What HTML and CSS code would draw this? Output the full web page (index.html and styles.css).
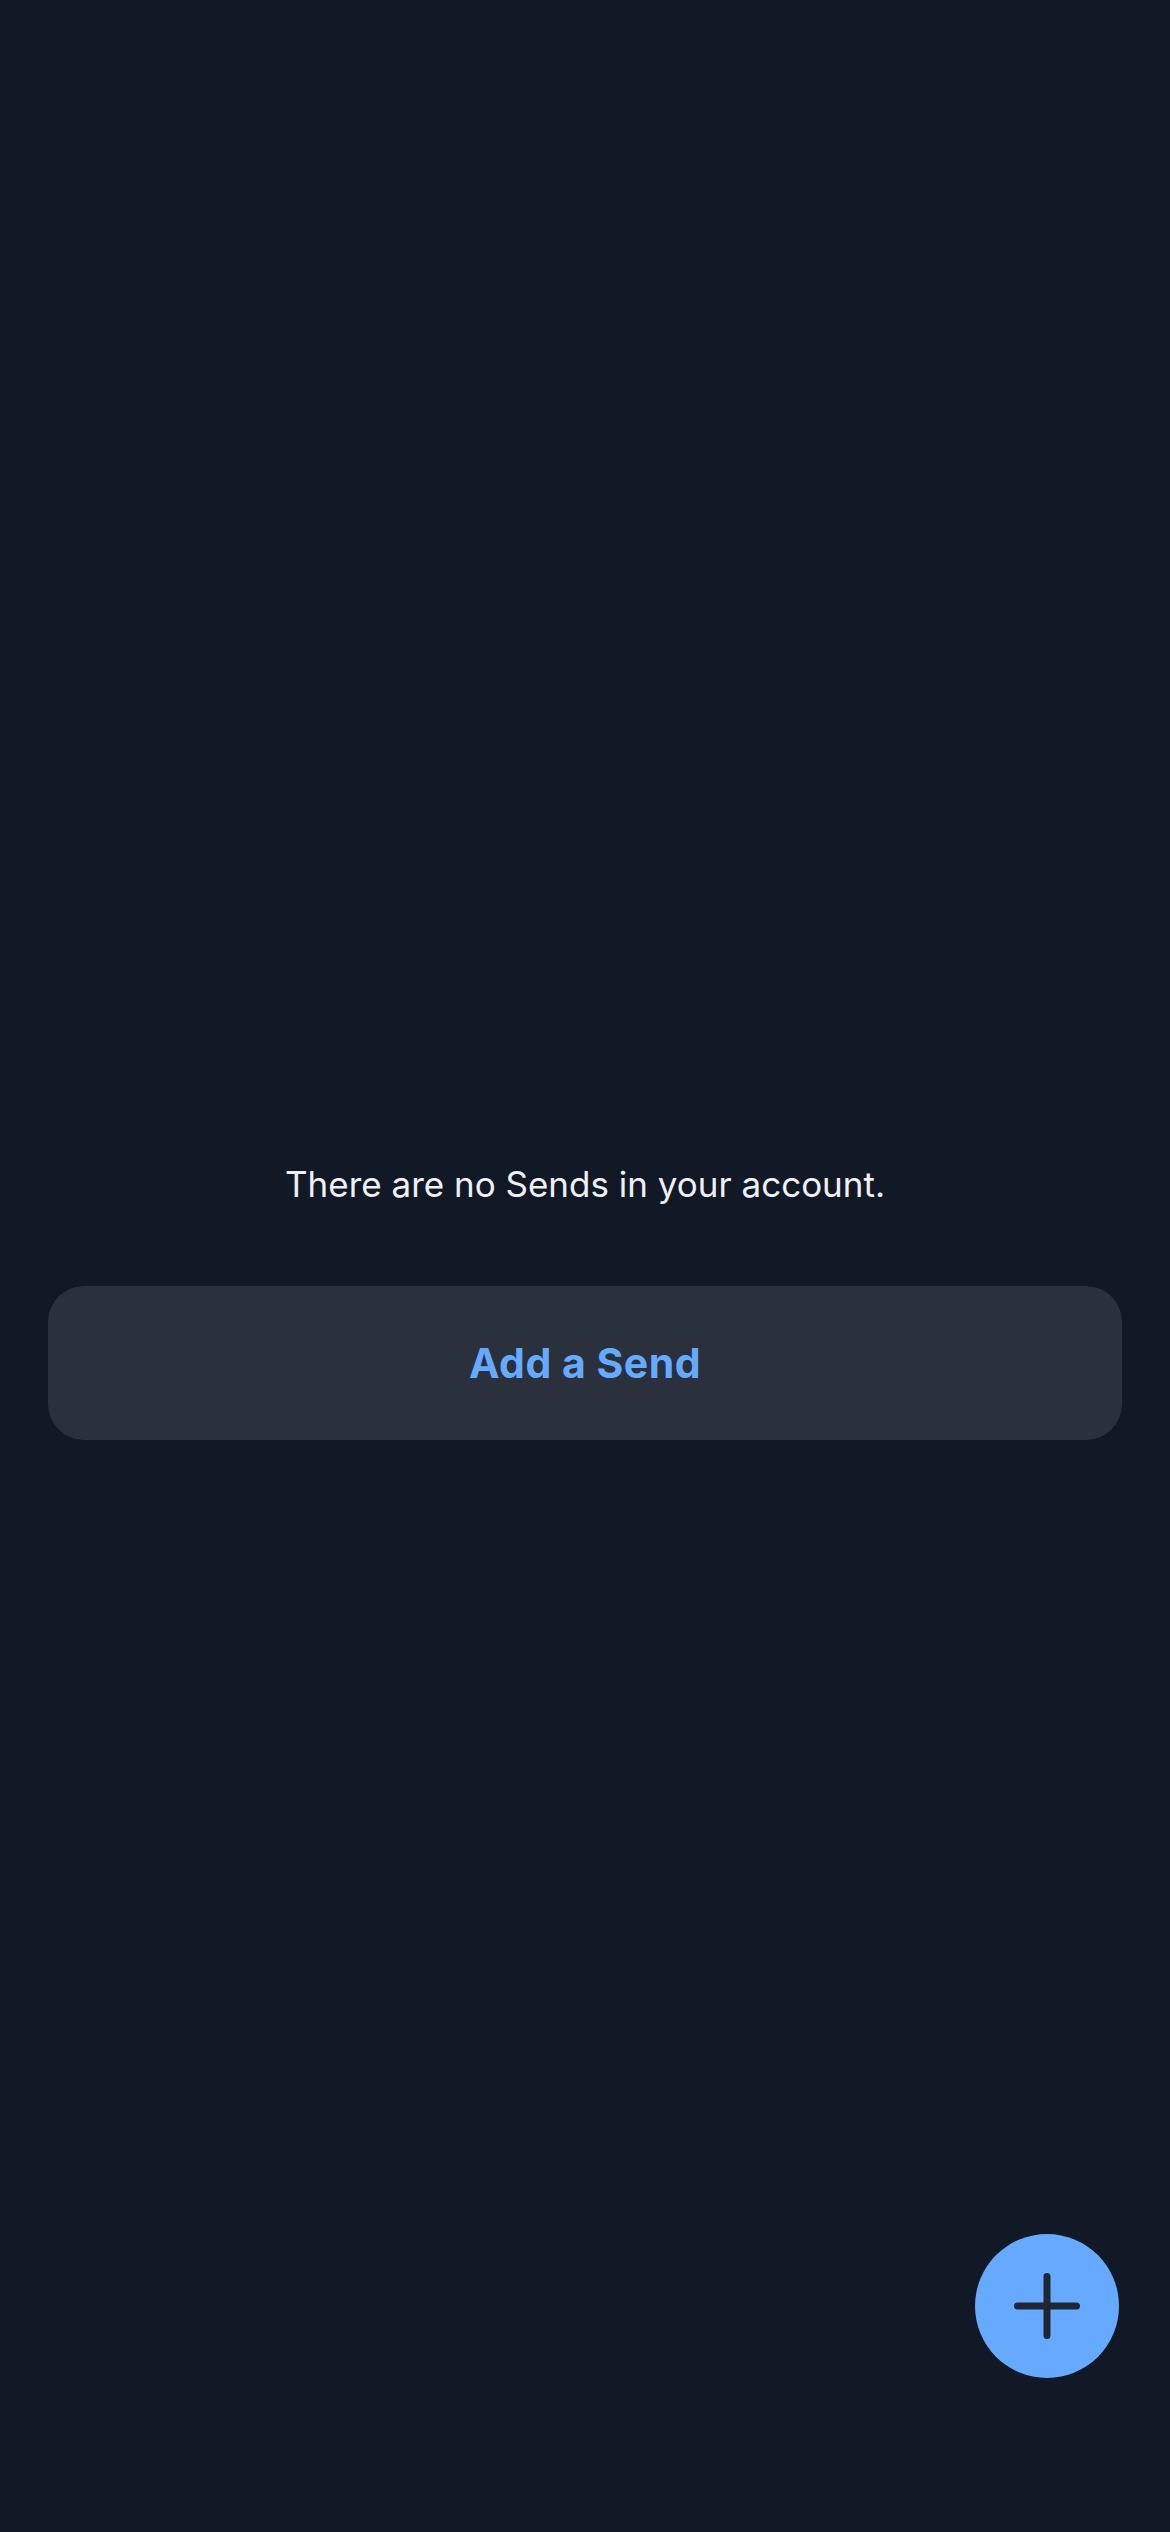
FILE: index.html
```html
<!DOCTYPE html>
<html lang="en">
<head>
<meta charset="utf-8">
<title>Send</title>
<link rel="stylesheet" href="styles.css">
</head>
<body>
<main class="screen">
  <section class="empty">
    <p class="empty-text">There are no Sends in your account.</p>
    <button class="add-btn" type="button">Add a Send</button>
  </section>
  <button class="fab" type="button" aria-label="Add">
    <svg width="66" height="66" viewBox="0 0 66 66" aria-hidden="true">
      <path d="M33 3.5V62.5M3.5 33H62.5" stroke="#1f2633" stroke-width="7" stroke-linecap="round" fill="none"/>
    </svg>
  </button>
</main>
</body>
</html>
```

FILE: styles.css
```css
* { box-sizing: border-box; }

html, body {
  margin: 0;
  padding: 0;
  background: #121926;
}

body {
  font-family: Inter, "DejaVu Sans", sans-serif;
}

.screen {
  position: relative;
  width: 1170px;
  height: 2532px;
  background: #121926;
  overflow: hidden;
}

.empty {
  display: flex;
  flex-direction: column;
  align-items: stretch;
  padding: 1160px 48px 0;
}

.empty-text {
  margin: 0;
  text-align: center;
  color: #eef0f4;
  font-size: 35px;
  line-height: 48px;
  font-weight: 400;
  letter-spacing: 0;
}

.add-btn {
  margin-top: 78px;
  height: 154px;
  border: 0;
  border-radius: 36px;
  background: #2a303c;
  color: #66aaff;
  font-family: Inter, "DejaVu Sans", sans-serif;
  font-size: 41px;
  font-weight: 700;
  letter-spacing: 0.5px;
  cursor: pointer;
}

.fab {
  position: absolute;
  right: 51px;
  bottom: 154px;
  width: 144px;
  height: 144px;
  border: 0;
  border-radius: 50%;
  background: #66aaff;
  display: flex;
  align-items: center;
  justify-content: center;
  padding: 0;
  cursor: pointer;
}
```
